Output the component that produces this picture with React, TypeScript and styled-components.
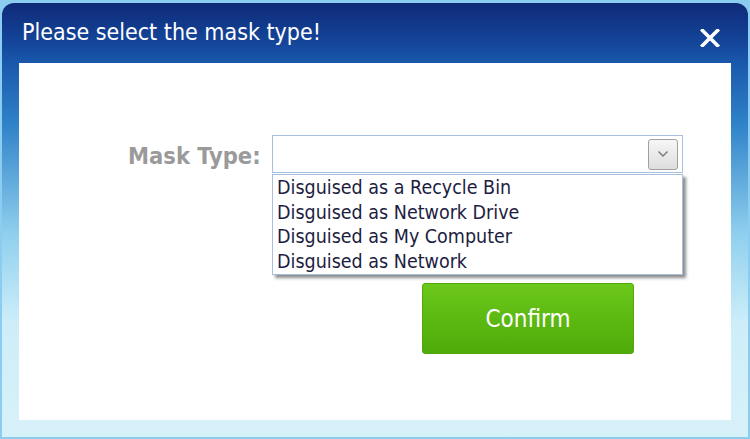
import React from "react";
import styled, { createGlobalStyle } from "styled-components";

const Global = createGlobalStyle`
  html, body { margin: 0; padding: 0; }
  body { width: 750px; height: 439px; overflow: hidden; background: #86c9ef; }
`;

const Page = styled.div`
  width: 750px;
  height: 439px;
  box-sizing: border-box;
  padding: 3px 2px 2px 2px;
  background: #8bcdf1;
  display: flex;
`;

const Frame = styled.div`
  flex: 1;
  display: flex;
  flex-direction: column;
  border-radius: 12px 12px 0 0;
  background: linear-gradient(
    to bottom,
    #0f2a79 0px,
    #14469a 40px,
    #1a5aae 62px,
    #2f82c8 120px,
    #8fcfee 230px,
    #cdeef9 320px,
    #d7f1f9 100%
  );
`;

const Header = styled.div`
  height: 60px;
  display: flex;
  align-items: center;
  justify-content: space-between;
  padding: 0 27px 0 20px;
  box-sizing: border-box;
`;

const Title = styled.div`
  font-family: "DejaVu Sans Condensed", "DejaVu Sans", sans-serif;
  font-size: 23px;
  color: #ffffff;
  margin-top: -2px;
`;

const Close = styled.button`
  border: 0;
  background: transparent;
  padding: 0;
  width: 22px;
  height: 20px;
  display: flex;
  align-items: center;
  justify-content: center;
  margin-top: 10px;
`;

const Body = styled.div`
  flex: 1;
  margin: 0 17px 17px 17px;
  background: #ffffff;
  padding: 72px 0 0 109px;
  box-sizing: border-box;
  display: grid;
  grid-template-columns: 144px 411px;
  justify-content: start;
  align-content: start;
`;

const Label = styled.div`
  font-family: "DejaVu Sans Condensed", "DejaVu Sans", sans-serif;
  font-weight: bold;
  font-size: 23.5px;
  color: #9a9a9a;
  height: 38px;
  padding-top: 3px;
  box-sizing: border-box;
  display: flex;
  align-items: center;
  white-space: nowrap;
`;

const Field = styled.div`
  position: relative;
  height: 38px;
  box-sizing: border-box;
  border: 1px solid #a9c0dc;
  background: #ffffff;
  display: flex;
  justify-content: flex-end;
  align-items: center;
  padding-right: 4px;
`;

const Arrow = styled.div`
  width: 30px;
  height: 31px;
  box-sizing: border-box;
  border: 1px solid #a0a0a0;
  border-radius: 3px;
  background: linear-gradient(to bottom, #f6f6f6, #dedede);
  display: flex;
  align-items: center;
  justify-content: center;
`;

const List = styled.ul`
  position: absolute;
  left: -1px;
  top: 38px;
  width: 411px;
  margin: 0;
  padding: 1px 0 0 0;
  list-style: none;
  box-sizing: border-box;
  border: 1px solid #a9c0dc;
  background: #ffffff;
  box-shadow: 3px 3px 3px rgba(0, 0, 0, 0.45);
  z-index: 2;
`;

const Item = styled.li`
  height: 24.5px;
  line-height: 24.5px;
  padding-left: 4px;
  font-family: "DejaVu Sans Condensed", "DejaVu Sans", sans-serif;
  font-size: 19.5px;
  color: #1d1d3f;
  white-space: nowrap;
`;

const Spacer = styled.div``;

const Confirm = styled.button`
  grid-column: 2;
  margin: 110px 0 0 150px;
  width: 212px;
  height: 71px;
  border: 1px solid #4fa80c;
  border-radius: 3px;
  background: linear-gradient(to bottom, #6cc81b, #4eab08);
  color: #ffffff;
  font-family: "DejaVu Sans Condensed", "DejaVu Sans", sans-serif;
  font-size: 24px;
  padding: 0;
`;

const options = [
  "Disguised as a Recycle Bin",
  "Disguised as Network Drive",
  "Disguised as My Computer",
  "Disguised as Network",
];

export default function App() {
  return (
    <>
      <Global />
      <Page>
        <Frame>
          <Header>
            <Title>Please select the mask type!</Title>
            <Close aria-label="close">
              <svg width="20" height="18" viewBox="0 0 20 18">
                <path d="M2.5 1.5 L17.5 16.5 M17.5 1.5 L2.5 16.5" stroke="#ffffff" strokeWidth="3.6" strokeLinecap="square" />
              </svg>
            </Close>
          </Header>
          <Body>
            <Label>Mask Type:</Label>
            <Field>
              <Arrow>
                <svg width="12" height="8" viewBox="0 0 12 8">
                  <path d="M1.5 1.5 L6 6 L10.5 1.5" stroke="#777777" strokeWidth="1.4" fill="none" />
                </svg>
              </Arrow>
              <List>
                {options.map((o) => (
                  <Item key={o}>{o}</Item>
                ))}
              </List>
            </Field>
            <Spacer />
            <Confirm>Confirm</Confirm>
          </Body>
        </Frame>
      </Page>
    </>
  );
}
